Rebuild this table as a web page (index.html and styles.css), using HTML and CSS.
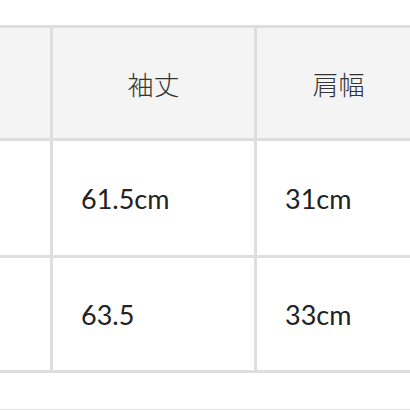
FILE: index.html
```html
<!DOCTYPE html>
<html lang="ja">
<head>
<meta charset="utf-8">
<link rel="stylesheet" href="styles.css">
</head>
<body>
<div class="page">
  <table class="size-table">
    <tr class="head">
      <td class="c1"></td>
      <td class="c2">袖丈</td>
      <td class="c3">肩幅</td>
    </tr>
    <tr class="r1">
      <td class="c1"></td>
      <td class="c2">61.5cm</td>
      <td class="c3">31cm</td>
    </tr>
    <tr class="r2">
      <td class="c1"></td>
      <td class="c2">63.5</td>
      <td class="c3">33cm</td>
    </tr>
  </table>
  <div class="next-line"></div>
</div>
</body>
</html>
```
FILE: styles.css
```css
html, body {
  margin: 0;
  padding: 0;
  background: #ffffff;
  overflow: hidden;
}
.page {
  width: 410px;
  height: 410px;
  padding-top: 25px;
  box-sizing: border-box;
  overflow: hidden;
}
.size-table {
  border-collapse: separate;
  border-spacing: 0;
  border-top: 3px solid #dedede;
  width: 423px;
  table-layout: fixed;
  font-family: "Lato", "Noto Sans CJK JP", sans-serif;
  color: #222222;
  font-size: 27px;
}
.size-table td {
  border-bottom: 3px solid #dedede;
  border-right: 3px solid #dedede;
  padding: 0 0 0 28px;
  box-sizing: border-box;
  text-align: left;
  vertical-align: middle;
}
.size-table .c1 { width: 53px; padding: 0; }
.size-table .c2 { width: 204px; }
.size-table .c3 { width: 166px; }
.head td {
  background: #f4f4f4;
  height: 113px;
  text-align: center;
  padding: 0;
  font-family: "Noto Sans CJK JP", sans-serif;
  font-size: 26px;
  font-weight: 300;
  color: #333333;
}
.r1 td { height: 117px; }
.r2 td { height: 115px; }
.next-line {
  margin-top: 36px;
  border-top: 1px solid #e4e4e4;
}
```
